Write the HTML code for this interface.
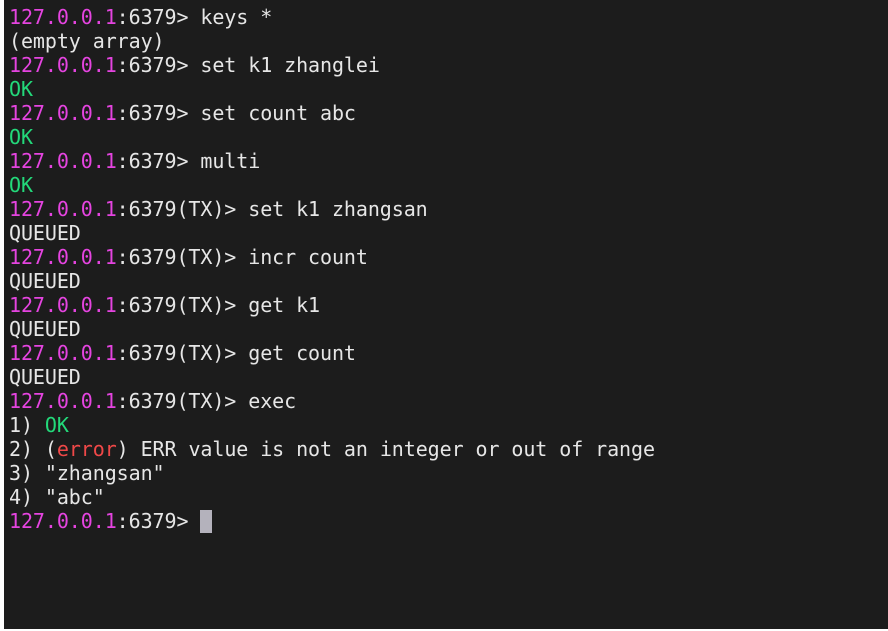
<!DOCTYPE html>
<html><head><style>
html,body{margin:0;padding:0;background:#fff;}
#t{position:absolute;left:4px;top:0;width:884px;height:629px;background:#1c1c1c;}
pre{margin:0;position:absolute;left:5px;top:5px;font-family:"DejaVu Sans Mono","Liberation Mono",monospace;font-size:20px;line-height:24px;color:#e6e6e6;letter-spacing:-0.08px;}
.p{color:#e544e0}.g{color:#23d97a}.r{color:#f04848}
.c{display:inline-block;width:12px;height:23px;background:#b4b2bc;vertical-align:-5px;}
</style></head><body><div id="t"><pre><span class="p">127.0.0.1</span>:6379&gt; keys *
(empty array)
<span class="p">127.0.0.1</span>:6379&gt; set k1 zhanglei
<span class="g">OK</span>
<span class="p">127.0.0.1</span>:6379&gt; set count abc
<span class="g">OK</span>
<span class="p">127.0.0.1</span>:6379&gt; multi
<span class="g">OK</span>
<span class="p">127.0.0.1</span>:6379(TX)&gt; set k1 zhangsan
QUEUED
<span class="p">127.0.0.1</span>:6379(TX)&gt; incr count
QUEUED
<span class="p">127.0.0.1</span>:6379(TX)&gt; get k1
QUEUED
<span class="p">127.0.0.1</span>:6379(TX)&gt; get count
QUEUED
<span class="p">127.0.0.1</span>:6379(TX)&gt; exec
1) <span class="g">OK</span>
2) (<span class="r">error</span>) ERR value is not an integer or out of range
3) "zhangsan"
4) "abc"
<span class="p">127.0.0.1</span>:6379&gt; <span class="c"></span></pre></div></body></html>
